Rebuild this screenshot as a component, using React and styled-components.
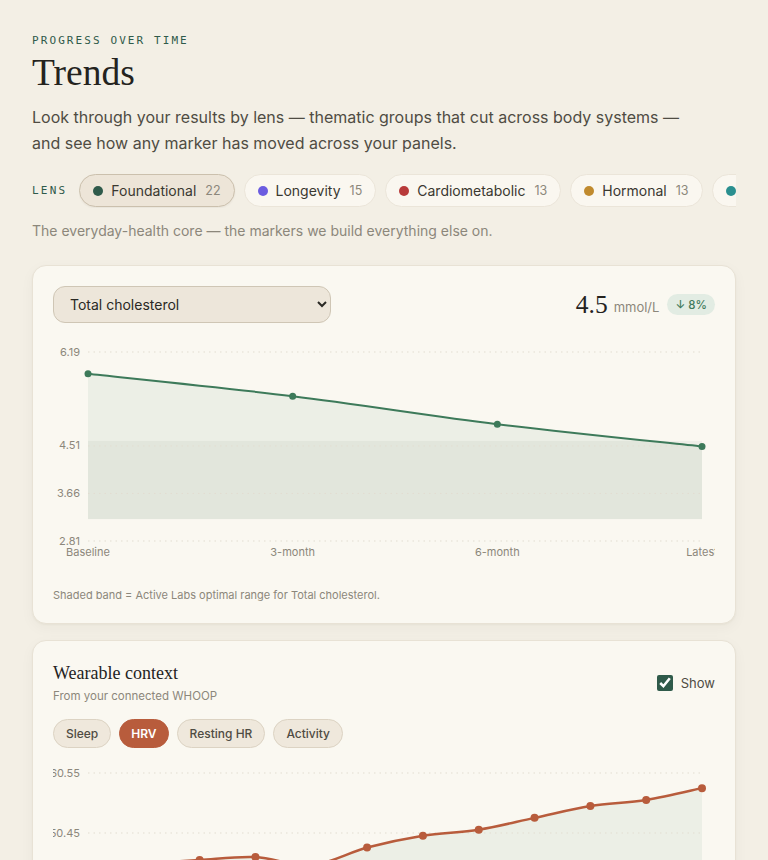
import React from "react";
import styled, { createGlobalStyle } from "styled-components";

const GlobalStyle = createGlobalStyle`
  html, body { margin: 0; padding: 0; background: #f3efe5; }
  body { font-family: Inter, "Noto Sans", "Liberation Sans", sans-serif; color: #2a2924; }
  * { box-sizing: border-box; }
`;

const MONO = `"DejaVu Sans Mono", "Liberation Mono", monospace`;
const SERIF = `"Liberation Serif", "DejaVu Serif", serif`;

const Page = styled.main`
  padding: 32px 32px 40px;
`;

const Eyebrow = styled.div`
  font-family: ${MONO};
  font-size: 11px;
  line-height: 15px;
  letter-spacing: 0.19em;
  color: #2f5a4a;
  text-transform: uppercase;
  margin-top: 1px;
`;

const Title = styled.h1`
  margin: 5px 0 0;
  font-family: ${SERIF};
  font-weight: 400;
  font-size: 37.5px;
  line-height: 40px;
  color: #24231e;
`;

const Lead = styled.p`
  margin: 11px 0 0;
  max-width: 660px;
  font-size: 16px;
  line-height: 26px;
  color: #4f4c43;
`;

const LensRow = styled.div`
  margin-top: 17px;
  display: flex;
  align-items: center;
  gap: 12px;
`;

const LensLabel = styled.span`
  font-family: ${MONO};
  font-size: 11px;
  letter-spacing: 0.2em;
  color: #2f5a4a;
  flex-shrink: 0;
`;

const PillTrack = styled.div`
  flex: 1;
  min-width: 0;
  display: flex;
  gap: 9px;
  overflow: hidden;
  padding: 1px 0;
`;

const Pill = styled.button`
  flex-shrink: 0;
  display: inline-flex;
  align-items: center;
  gap: 8px;
  height: 33px;
  padding: 0 13px;
  border-radius: 999px;
  border: 1px solid ${(p) => (p.$active ? "#cbc0ad" : "#ebe5d9")};
  background: ${(p) => (p.$active ? "#ede5d8" : "#faf7f0")};
  box-shadow: ${(p) => (p.$active ? "0 1px 2px rgba(60,50,30,0.06)" : "none")};
  font-family: inherit;
  font-size: 14px;
  color: #3a3830;
  cursor: pointer;
`;

const Dot = styled.span`
  width: 10px;
  height: 10px;
  border-radius: 50%;
  background: ${(p) => p.$color};
`;

const Count = styled.span`
  margin-left: 1px;
  font-size: 12.5px;
  color: #8c877b;
`;

const Note = styled.p`
  margin: 13px 0 0;
  font-size: 14px;
  line-height: 20px;
  color: #8c877b;
`;

const Card = styled.section`
  margin-top: ${(p) => p.$gap}px;
  background: #faf8f1;
  border: 1px solid #e8e2d5;
  border-radius: 14px;
  padding: 20px;
  box-shadow: 0 1px 2px rgba(60, 50, 30, 0.04), 0 4px 14px rgba(60, 50, 30, 0.04);
`;

const CardHead = styled.div`
  display: flex;
  justify-content: space-between;
  align-items: center;
`;

const Select = styled.select`
  width: 278px;
  height: 37px;
  padding: 0 12px 0 12px;
  border-radius: 12px;
  border: 1px solid #cfc6b5;
  background: #ede6da;
  font-family: inherit;
  font-size: 14px;
  color: #2a2924;
`;

const Reading = styled.div`
  display: flex;
  align-items: center;
`;

const Value = styled.span`
  font-family: ${SERIF};
  font-size: 25.5px;
  color: #24231e;
`;

const Unit = styled.span`
  margin-left: 6px;
  margin-top: 4px;
  font-size: 13px;
  color: #8c877b;
`;

const Badge = styled.span`
  margin-left: 8px;
  height: 21px;
  padding: 0 8px;
  display: inline-flex;
  align-items: center;
  border-radius: 11px;
  background: #e2ece3;
  color: #3f7a5c;
  font-size: 11.5px;
  font-weight: 500;
`;

const ChartSvg = styled.svg`
  display: block;
  margin-top: ${(p) => p.$top}px;
  width: 100%;
`;

const Caption = styled.p`
  margin: 26px 0 0;
  font-size: 11px;
  line-height: 16px;
  color: #8c877b;
`;

const WearTitle = styled.h2`
  margin: 0;
  font-family: ${SERIF};
  font-weight: 400;
  font-size: 18px;
  line-height: 24px;
  color: #24231e;
`;

const WearSub = styled.div`
  margin-top: 3px;
  font-size: 11.5px;
  line-height: 16px;
  color: #8c877b;
`;

const Toggle = styled.label`
  display: flex;
  align-items: center;
  gap: 8px;
  font-size: 13px;
  color: #4f4c43;
`;

const Check = styled.input`
  margin: 0;
  width: 16px;
  height: 16px;
  accent-color: #2f5a4a;
`;

const Tabs = styled.div`
  margin-top: 15px;
  display: flex;
  gap: 8px;
`;

const Tab = styled.button`
  height: 29px;
  padding: 0 ${(p) => (p.$active ? 11 : 12)}px;
  border-radius: 999px;
  border: 1px solid ${(p) => (p.$active ? "#b85c3c" : "#dcd3c3")};
  background: ${(p) => (p.$active ? "#b85c3c" : "#efe8dc")};
  color: ${(p) => (p.$active ? "#ffffff" : "#4f4c43")};
  font-family: inherit;
  font-size: 12px;
  font-weight: ${(p) => (p.$active ? 600 : 500)};
  cursor: pointer;
`;

const lenses = [
  { name: "Foundational", count: 22, color: "#2f5a4a", active: true },
  { name: "Longevity", count: 15, color: "#6b5ce0" },
  { name: "Cardiometabolic", count: 13, color: "#b83a3a" },
  { name: "Hormonal", count: 13, color: "#c08a2e" },
  { name: "Inflammation", count: 9, color: "#2a8f8f" },
  { name: "Micronutrients", count: 11, color: "#8a6f4e" },
];

function smoothPath(pts) {
  let d = `M${pts[0][0]},${pts[0][1]}`;
  for (let i = 0; i < pts.length - 1; i++) {
    const p0 = pts[i - 1] || pts[i];
    const p1 = pts[i];
    const p2 = pts[i + 1];
    const p3 = pts[i + 2] || p2;
    const c1x = p1[0] + (p2[0] - p0[0]) / 6;
    const c1y = p1[1] + (p2[1] - p0[1]) / 6;
    const c2x = p2[0] - (p3[0] - p1[0]) / 6;
    const c2y = p2[1] - (p3[1] - p1[1]) / 6;
    d += ` C${c1x},${c1y} ${c2x},${c2y} ${p2[0]},${p2[1]}`;
  }
  return d;
}

const W = 662;
const PL = 35;
const PR = 649;

function LineChart({ values, min, max, top, bottom, ticks, color, band, xLabels, height, areaBottom, strokeWidth, r }) {
  const sy = (v) => top + ((max - v) / (max - min)) * (bottom - top);
  const sx = (i) => PL + (i * (PR - PL)) / (values.length - 1);
  const pts = values.map((v, i) => [sx(i), sy(v)]);
  const line = smoothPath(pts);
  const area = `${line} L${PR},${areaBottom} L${PL},${areaBottom} Z`;
  return (
    <ChartSvg viewBox={`0 0 ${W} ${height}`} height={height} $top={band ? 18 : 15}>
      {band && (
        <rect x={PL} y={sy(band[1])} width={PR - PL} height={sy(band[0]) - sy(band[1])} fill="#efeee7" />
      )}
      <path d={area} fill="rgba(61,122,90,0.07)" />
      {ticks.map((t) => (
        <g key={t}>
          <line x1={PL} x2={PR} y1={sy(t)} y2={sy(t)} stroke="#e2ddd1" strokeWidth="1" strokeDasharray="1.5 4" />
          <text x={27} y={sy(t) + 3.5} textAnchor="end" fontSize="11" fill="#8c877b" fontFamily="Inter, sans-serif">
            {t.toFixed(2)}
          </text>
        </g>
      ))}
      <path d={line} fill="none" stroke={color} strokeWidth={strokeWidth} strokeLinejoin="round" strokeLinecap="round" />
      {pts.map(([x, y], i) => (
        <circle key={i} cx={x} cy={y} r={r} fill={color} />
      ))}
      {xLabels &&
        xLabels.map((l, i) => (
          <text key={l} x={sx(i)} y={215} textAnchor="middle" fontSize="11" fill="#8c877b" fontFamily="Inter, sans-serif">
            {l}
          </text>
        ))}
    </ChartSvg>
  );
}

export default function App() {
  return (
    <Page>
      <GlobalStyle />
      <Eyebrow>Progress over time</Eyebrow>
      <Title>Trends</Title>
      <Lead>
        Look through your results by lens — thematic groups that cut across body systems — and see how any marker has
        moved across your panels.
      </Lead>
      <LensRow>
        <LensLabel>LENS</LensLabel>
        <PillTrack>
          {lenses.map((l) => (
            <Pill key={l.name} $active={l.active}>
              <Dot $color={l.color} />
              {l.name}
              <Count>{l.count}</Count>
            </Pill>
          ))}
        </PillTrack>
      </LensRow>
      <Note>The everyday-health core — the markers we build everything else on.</Note>

      <Card $gap={24}>
        <CardHead>
          <Select defaultValue="tc">
            <option value="tc">Total cholesterol</option>
            <option value="ldl">LDL cholesterol</option>
            <option value="hdl">HDL cholesterol</option>
          </Select>
          <Reading>
            <Value>4.5</Value>
            <Unit>mmol/L</Unit>
            <Badge>↓ 8%</Badge>
          </Reading>
        </CardHead>
        <LineChart
          values={[5.8, 5.4, 4.9, 4.5]}
          min={2.81}
          max={6.19}
          top={11}
          bottom={200}
          ticks={[6.19, 4.51, 3.66, 2.81]}
          band={[3.2, 4.6]}
          color="#3d7a5a"
          xLabels={["Baseline", "3-month", "6-month", "Latest"]}
          height={220}
          areaBottom={178}
          strokeWidth={2}
          r={3.5}
        />
        <Caption>Shaded band = Active Labs optimal range for Total cholesterol.</Caption>
      </Card>

      <Card $gap={16}>
        <CardHead>
          <div>
            <WearTitle>Wearable context</WearTitle>
            <WearSub>From your connected WHOOP</WearSub>
          </div>
          <Toggle>
            <Check type="checkbox" defaultChecked />
            Show
          </Toggle>
        </CardHead>
        <Tabs>
          <Tab>Sleep</Tab>
          <Tab $active>HRV</Tab>
          <Tab>Resting HR</Tab>
          <Tab>Activity</Tab>
        </Tabs>
        <LineChart
          values={[44.2, 45.2, 45.9, 46.4, 45.0, 48.0, 50.0, 51.0, 53.0, 55.0, 56.0, 58.0]}
          min={30.25}
          max={60.55}
          top={10}
          bottom={190}
          ticks={[60.55, 50.45, 40.35, 30.25]}
          color="#b85c3c"
          height={200}
          areaBottom={190}
          strokeWidth={2.5}
          r={4}
        />
      </Card>
    </Page>
  );
}
